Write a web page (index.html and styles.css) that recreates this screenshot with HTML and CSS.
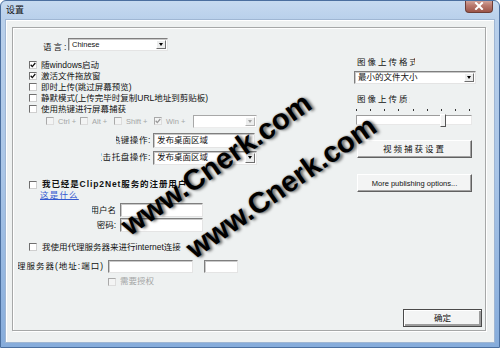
FILE: index.html
```html
<!DOCTYPE html>
<html lang="zh-CN">
<head>
<meta charset="utf-8">
<title>设置</title>
<link rel="stylesheet" href="styles.css">
</head>
<body>
<div class="window">
  <div class="titlebar">
    <span class="title">设置</span>
    <div class="close"><svg width="10" height="8" viewBox="0 0 10 8"><path d="M2 1 L8 7 M8 1 L2 7" stroke="#fff" stroke-width="2" stroke-linecap="square"/></svg></div>
  </div>
  <div class="client">
    <div class="panel">
      <div class="cols">
        <div class="left">
          <div class="row lang">
            <span class="lbl sp2">语言:</span>
            <div class="combo w-lang"><span class="val latin">Chinese</span><span class="arrow"></span></div>
          </div>
          <div class="cblist">
            <div class="row cbrow"><span class="cb on"><svg viewBox="0 0 6 6"><path d="M0.7 2.8 L2.3 4.6 L5.3 1"/></svg></span><span>随windows启动</span></div>
            <div class="row cbrow"><span class="cb on"><svg viewBox="0 0 6 6"><path d="M0.7 2.8 L2.3 4.6 L5.3 1"/></svg></span><span>激活文件拖放窗</span></div>
            <div class="row cbrow"><span class="cb"></span><span>即时上传(跳过屏幕预览)</span></div>
            <div class="row cbrow"><span class="cb"></span><span>静默模式(上传完毕时复制URL地址到剪贴板)</span></div>
            <div class="row cbrow"><span class="cb"></span><span>使用热键进行屏幕捕获</span></div>
          </div>
          <div class="modrow">
            <div class="mod"><span class="cb dis"></span><span class="latin dim">Ctrl +</span></div>
            <div class="mod"><span class="cb dis"></span><span class="latin dim">Alt +</span></div>
            <div class="mod"><span class="cb dis"></span><span class="latin dim">Shift +</span></div>
            <div class="mod"><span class="cb dis on"><svg viewBox="0 0 6 6"><path d="M0.7 2.8 L2.3 4.6 L5.3 1"/></svg></span><span class="latin dim">Win +</span></div>
            <div class="combo dis w-mod"><span class="val"></span><span class="arrow"></span></div>
          </div>
          <div class="row hot">
            <div class="clip"><span class="sp05">热键操作:</span></div>
            <div class="tb w-act"><span class="val">发布桌面区域</span></div>
          </div>
          <div class="row tray">
            <div class="clip"><span class="sp05">双击托盘操作:</span></div>
            <div class="combo w-tray"><span class="val">发布桌面区域</span><span class="arrow"></span></div>
          </div>
          <div class="row reg"><span class="cb"></span><span class="bold">我已经是Clip2Net服务的注册用户</span></div>
          <div class="row linkrow"><span class="link">这是什么</span></div>
          <div class="row user">
            <div class="clip"><span>用户名</span></div>
            <div class="tb w-user"></div>
          </div>
          <div class="row pwd">
            <div class="clip"><span>密码:</span></div>
            <div class="tb w-user"></div>
          </div>
          <div class="row proxycb"><span class="cb"></span><span>我使用代理服务器来进行internet连接</span></div>
          <div class="row proxy">
            <div class="clip"><span class="sp1">代理服务器(地址:端口)</span></div>
            <div class="tb w-host"></div>
            <div class="tb w-port"></div>
          </div>
          <div class="row auth"><span class="cb dis"></span><span class="dim">需要授权</span></div>
        </div>
        <div class="right">
          <div class="rlabel r1"><span>图像上传格式:</span></div>
          <div class="combo w-fmt"><span class="val">最小的文件大小</span><span class="arrow"></span></div>
          <div class="rlabel r2"><span>图像上传质量:</span></div>
          <div class="ticks"><i></i><i></i><i></i><i></i><i></i><i></i><i></i><i></i><i></i></div>
          <div class="slider"><span class="thumb"></span></div>
          <div class="btn b1"><span class="sp2">视频捕获设置</span></div>
          <div class="btn b2"><span class="latin">More publishing options...</span></div>
        </div>
      </div>
      <div class="footer"><div class="btn ok">确定</div></div>
    </div>
  </div>
  <div class="wm wm1">www.Cnerk.com</div>
  <div class="wm wm2">www.Cnerk.com</div>
</div>
</body>
</html>
```

FILE: styles.css
```css
* { box-sizing: border-box; margin: 0; padding: 0; }
html, body { width: 500px; height: 348px; overflow: hidden; background: #fff; }
body {
  font-family: "Liberation Sans", "Noto Sans CJK SC", sans-serif;
  font-size: 8.5px;
  line-height: 11px;
  color: #111;
}
.window {
  position: relative;
  width: 500px;
  height: 348px;
  display: flex;
  flex-direction: column;
  padding: 0 4px 4px;
  border: 1px solid #4b6f9f;
  border-radius: 6px 6px 0 0;
  background: linear-gradient(180deg, #c6daf0 0, #b9d0eb 18px, #a9c5e7 50%, #86acdb 100%);
  overflow: hidden;
}
.titlebar {
  height: 18px;
  display: flex;
  justify-content: space-between;
  align-items: flex-start;
  flex: none;
}
.title { margin: 4px 0 0 1px; font-size: 9px; line-height: 10px; color: #111; }
.close {
  width: 28px;
  height: 13px;
  margin: -1px 2px 0 0;
  display: flex;
  align-items: center;
  justify-content: center;
  background: linear-gradient(180deg, #d6aba2 0, #b97a6f 45%, #9c5448 100%);
  border: 1px solid #6d3d36;
  border-top: none;
  border-radius: 0 0 4px 4px;
}
.client {
  flex: 1;
  display: flex;
  padding: 7px 8px 11px 6px;
  background: #eef1f1;
  border: 1px solid #9fb6d3;
  box-shadow: inset 1px 1px 0 #fff;
}
.panel {
  flex: 1;
  display: flex;
  flex-direction: column;
  border: 1px solid #a6a8a8;
  box-shadow: 1px 1px 0 #fff, inset 1px 1px 0 #fff;
}
.cols {
  display: grid;
  grid-template-columns: 246px 122px;
  column-gap: 90px;
  padding-left: 5px;
  align-items: start;
}
.left { padding-top: 10px; display: flex; flex-direction: column; }
.right { padding-top: 29px; display: flex; flex-direction: column; }
.footer { margin-top: auto; display: flex; justify-content: flex-end; padding: 0 3px 3px 0; }

.latin { font-size: 7.5px; }
.dim { color: #a4a6a6; }
.bold { font-weight: bold; letter-spacing: 0.9px; }
.sp2 { letter-spacing: 2px; }
.sp1 { letter-spacing: 1px; }
.sp05 { letter-spacing: 0.6px; }
.link { color: #3358d0; text-decoration: underline; letter-spacing: 1.2px; }

.row { display: flex; align-items: center; white-space: nowrap; }
.lang { align-items: flex-end; padding-left: 25px; height: 13px; margin-bottom: 8.5px; }
.lang .lbl { width: 25px; line-height: 9px; margin-bottom: -1px; }
.cbrow { height: 11px; padding-left: 11px; gap: 4px; }

.cb {
  width: 8px;
  height: 8px;
  flex: none;
  background: #fff;
  border: 1px solid;
  border-color: #6f6f6f #cfcfcf #cfcfcf #6f6f6f;
  display: flex;
}
.cb svg { width: 6px; height: 6px; fill: none; stroke: #111; stroke-width: 1.3; }
.cb.dis { background: #f3f4f4; border-color: #a9a9a9 #dcdcdc #dcdcdc #a9a9a9; }
.cb.dis svg { stroke: #9a9a9a; }

.modrow {
  display: grid;
  grid-template-columns: 34px 34px 40px 39px 64px;
  align-items: center;
  height: 13px;
  padding-left: 28px;
}
.mod { display: flex; align-items: center; gap: 4px; white-space: nowrap; }

.tb, .combo {
  height: 100%;
  display: flex;
  align-items: center;
  background: #fff;
  border: 1px solid;
  border-color: #7f7f7f #e4e4e4 #e4e4e4 #7f7f7f;
  box-shadow: inset 1px 1px 0 #c9c9c9;
  overflow: hidden;
}
.val { flex: 1; padding-left: 3px; white-space: nowrap; overflow: hidden; }
.arrow {
  width: 10px;
  align-self: stretch;
  margin: 1px;
  flex: none;
  display: flex;
  align-items: center;
  justify-content: center;
  background: #eceded;
  border: 1px solid;
  border-color: #fff #6f6f6f #6f6f6f #fff;
}
.arrow::after {
  content: "";
  border-left: 2.5px solid transparent;
  border-right: 2.5px solid transparent;
  border-top: 3px solid #000;
}
.combo.dis .arrow::after { border-top-color: #a0a0a0; }
.combo.dis .arrow { border-color: #fff #b0b0b0 #b0b0b0 #fff; }
.combo.dis { border-color: #a8a8a8 #ececec #ececec #a8a8a8; box-shadow: none; }

.w-lang { width: 100px; }
.w-mod { width: 64px; }
.w-act { width: 102px; }
.w-tray { width: 104px; }
.w-user { width: 83px; }
.w-host { width: 85px; }
.w-port { width: 34px; margin-left: 11px; }
.w-fmt { width: 122px; height: 13px; margin-top: 3px; }

.clip { display: flex; justify-content: flex-end; overflow: hidden; white-space: nowrap; flex: none; }
.hot { height: 15px; margin-top: 5.5px; padding-left: 98px; }
.hot .clip { width: 37px; padding-right: 2px; }
.tray { height: 14px; margin-top: 2.5px; padding-left: 83px; }
.tray .clip { width: 52px; padding-right: 2px; }
.reg { height: 11px; margin-top: 14.5px; padding-left: 11px; gap: 5px; }
.linkrow { height: 11px; padding-left: 22px; }
.user { height: 14px; margin-top: 2px; padding-left: 74px; }
.pwd { height: 14px; margin-top: 1px; padding-left: 74px; }
.user .clip, .pwd .clip { width: 28px; padding-right: 4px; }
.proxycb { height: 11px; margin-top: 9.5px; padding-left: 11px; gap: 5px; }
.proxy { height: 13px; margin-top: 7.5px; }
.proxy .clip { width: 90px; padding-right: 4px; }
.auth { height: 11px; margin-top: 3px; padding-left: 90px; gap: 4px; }

.rlabel { height: 11px; overflow: hidden; white-space: nowrap; letter-spacing: 2px; margin-left: 3px; }
.r1 { width: 58px; }
.r2 { width: 53px; margin-top: 10px; }
.ticks { display: flex; justify-content: space-between; width: 114px; height: 3px; margin: 4px 0 0 2px; }
.ticks i { width: 1px; height: 2px; background: #333; }
.slider {
  position: relative;
  width: 116px;
  height: 10px;
  margin: 3px 0 0 2px;
  background: #fff;
  border: 1px solid;
  border-color: #9c9c9c #e8e8e8 #e8e8e8 #9c9c9c;
}
.thumb {
  position: absolute;
  left: 83px;
  top: -2px;
  width: 6px;
  height: 13px;
  background: #f1f2f2;
  border: 1px solid;
  border-color: #fff #555 #555 #fff;
}
.btn {
  display: flex;
  align-items: center;
  justify-content: center;
  height: 18px;
  background: #f3f4f4;
  border: 1px solid;
  border-color: #fff #616161 #616161 #fff;
  box-shadow: inset -1px -1px 0 #a3a3a3;
  white-space: nowrap;
}
.b1 { width: 115px; margin: 15px 0 0 3px; }
.b2 { width: 115px; margin: 16px 0 0 3px; }
.ok {
  width: 79px;
  border: 1px solid #4a4a4a;
  box-shadow: inset 1px 1px 0 #fff, inset -2px -2px 0 #9c9c9c;
}

.wm {
  position: absolute;
  transform: translate(-50%, -50%) rotate(-35deg);
  font-family: "Liberation Sans", sans-serif;
  font-weight: bold;
  font-size: 29px;
  line-height: 30px;
  color: #000;
  white-space: nowrap;
  text-shadow: 2px 2px 3px rgba(0, 0, 0, 0.55), 0 0 2px rgba(0, 0, 0, 0.35);
  pointer-events: none;
}
.wm1 { left: 215px; top: 163px; }
.wm2 { left: 280px; top: 186px; }
```
